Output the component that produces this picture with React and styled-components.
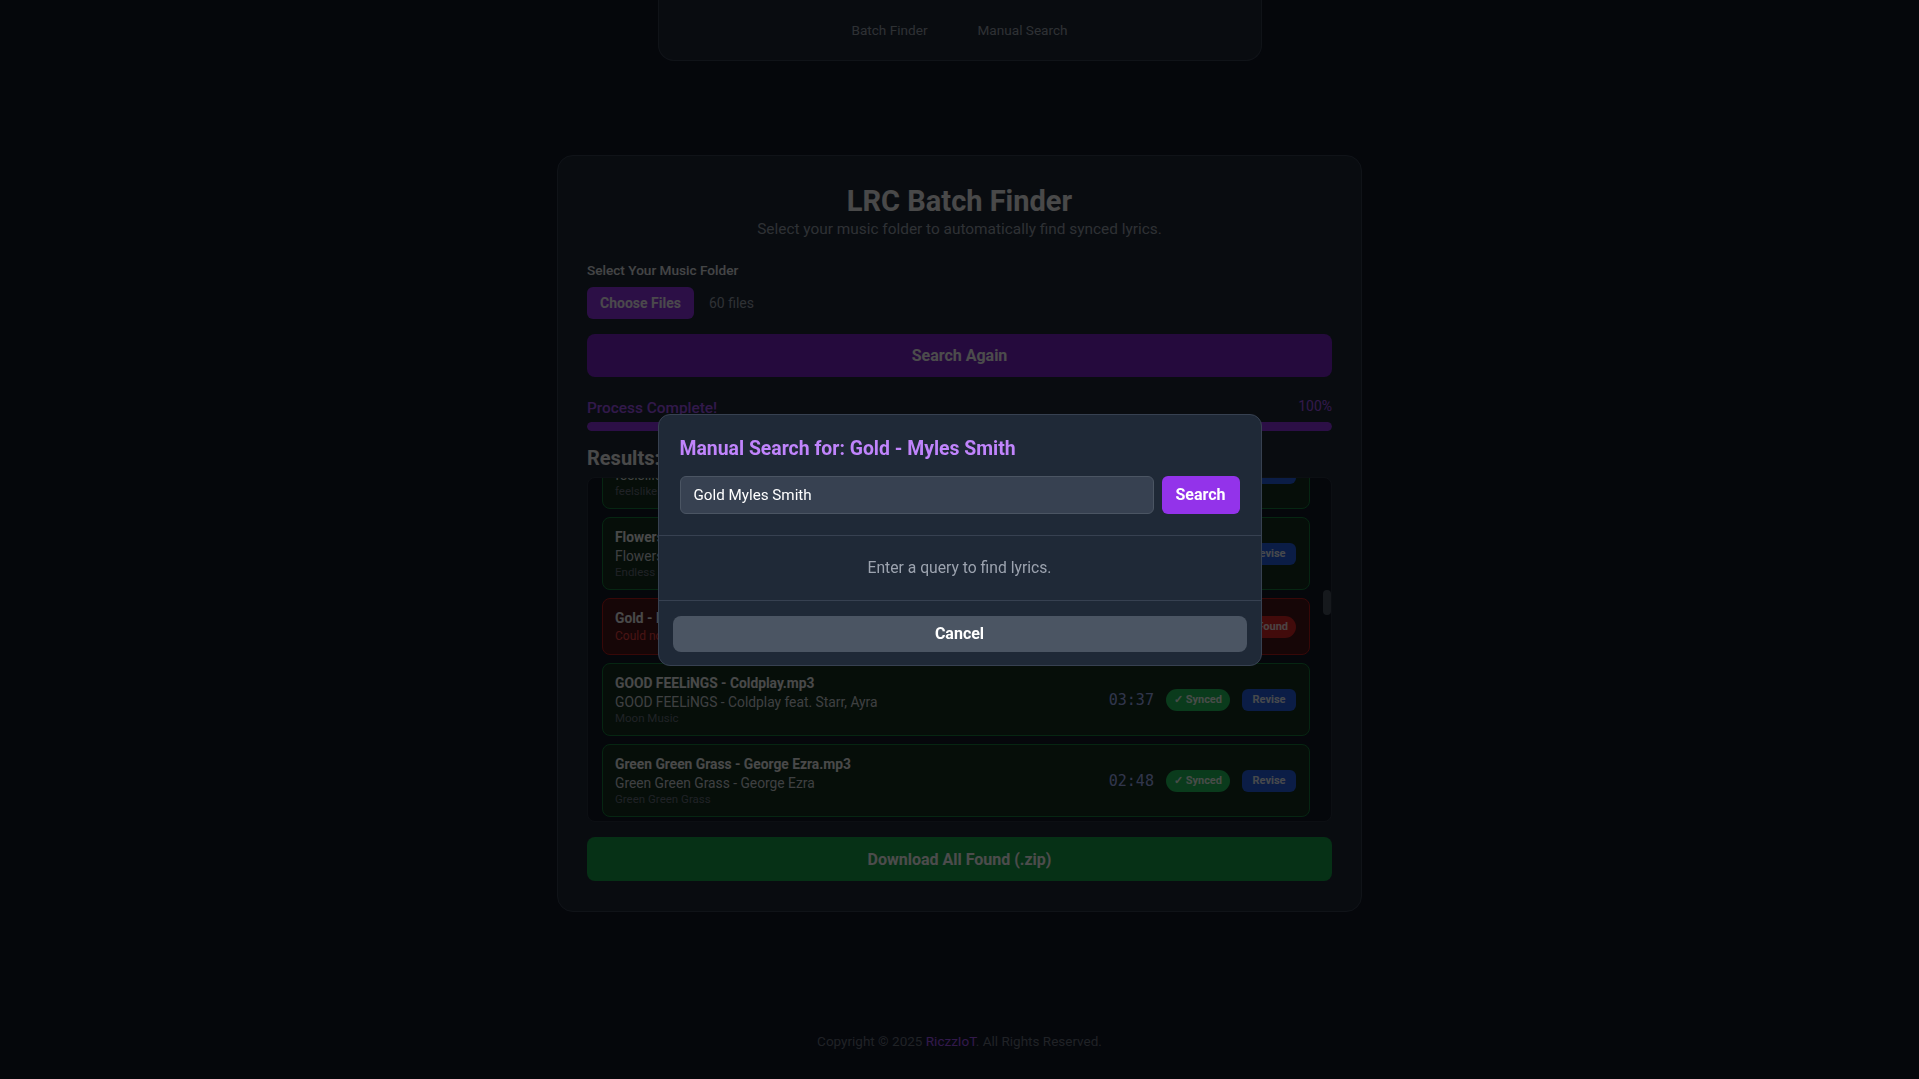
import React, { useLayoutEffect, useRef } from "react";
import styled, { createGlobalStyle } from "styled-components";

const GlobalStyle = createGlobalStyle`
  html, body { margin: 0; padding: 0; }
  body {
    background: #111827;
    font-family: Roboto, "Liberation Sans", Arial, sans-serif;
    color: #f3f4f6;
  }
  * { box-sizing: border-box; }
`;

const Page = styled.div`
  min-height: 100vh;
  display: flex;
  flex-direction: column;
  align-items: center;
`;

const Nav = styled.nav`
  width: 604px;
  height: 61px;
  background: #1f2937;
  border: 1px solid #374151;
  border-top: none;
  border-radius: 0 0 16px 16px;
  display: flex;
  justify-content: center;
  align-items: center;
  gap: 50px;
  padding-bottom: 1px;
`;

const NavLink = styled.a`
  font-size: 13.6px;
  color: #9ca3af;
  text-decoration: none;
`;

const Main = styled.main`
  flex: 1;
  width: 100%;
  display: flex;
  justify-content: center;
  padding-top: 94px;
`;

const Card = styled.section`
  width: 805px;
  height: 757px;
  background: #1f2937;
  border: 1px solid #374151;
  border-radius: 16px;
  padding: 27px 29px 29px;
  display: flex;
  flex-direction: column;
`;

const Title = styled.h1`
  margin: 0;
  text-align: center;
  font-size: 29px;
  line-height: 36px;
  font-weight: 700;
  color: #f3f4f6;
`;

const Subtitle = styled.p`
  margin: 0;
  text-align: center;
  font-size: 15.4px;
  line-height: 20px;
  color: #9ca3af;
`;

const Label = styled.div`
  margin-top: 21px;
  font-size: 13.6px;
  line-height: 20px;
  font-weight: 500;
  color: #e5e7eb;
`;

const FileRow = styled.div`
  margin-top: 7px;
  display: flex;
  align-items: center;
  gap: 15px;
`;

const ChooseButton = styled.button`
  height: 32px;
  width: 107px;
  padding: 0;
  border: none;
  border-radius: 6px;
  background: #9333ea;
  color: #faf5ff;
  font-family: inherit;
  font-size: 14px;
  font-weight: 700;
`;

const FileCount = styled.span`
  font-size: 14px;
  color: #9ca3af;
`;

const WideButton = styled.button`
  width: 100%;
  height: ${(p) => p.$h}px;
  margin-top: ${(p) => p.$mt}px;
  border: none;
  border-radius: 8px;
  background: ${(p) => p.$bg};
  color: #ffffff;
  font-family: inherit;
  font-size: 16px;
  font-weight: 700;
`;

const ProgressHead = styled.div`
  margin-top: 17px;
  display: flex;
  justify-content: space-between;
  align-items: center;
  height: 24px;
`;

const ProgressText = styled.span`
  font-size: 15.4px;
  font-weight: 500;
  color: #a855f7;
  padding-top: 4px;
`;

const ProgressPct = styled.span`
  font-size: 14px;
  color: #a855f7;
`;

const Bar = styled.div`
  margin-top: 4px;
  height: 9px;
  border-radius: 5px;
  background: #374151;
  overflow: hidden;
`;

const BarFill = styled.div`
  height: 100%;
  background: #9333ea;
  border-radius: 5px;
`;

const ResultsTitle = styled.h2`
  margin: 13px 0 0;
  font-size: 20px;
  line-height: 28px;
  font-weight: 700;
  color: #f3f4f6;
`;

const ListFrame = styled.div`
  position: relative;
  margin-top: 5px;
  height: 345px;
  border: 1px solid #2b3442;
  border-radius: 8px;
  background: #111827;
  overflow: hidden;
`;

const List = styled.div`
  height: 100%;
  padding: 6px 21px 6px 14px;
  overflow-y: scroll;
  scrollbar-width: none;
  display: flex;
  flex-direction: column;
  gap: 8px;
  &::-webkit-scrollbar { display: none; }
`;

const Thumb = styled.div`
  position: absolute;
  right: 0;
  width: 8px;
  border-radius: 4px;
  background: #4b5563;
`;

const Row = styled.div`
  flex: none;
  display: flex;
  align-items: center;
  gap: 12px;
  padding: 10px 13px 10px 12px;
  border-radius: 8px;
  border: 1px solid ${(p) => (p.$ok ? "#15803d" : "#b91c1c")};
  background: ${(p) => (p.$ok ? "#14301f" : "#4a1418")};
`;

const Info = styled.div`
  flex: 1;
  min-width: 0;
  display: flex;
  flex-direction: column;
`;

const FileName = styled.div`
  font-size: 13.8px;
  line-height: 19px;
  font-weight: 700;
  color: #f3f4f6;
  white-space: nowrap;
  overflow: hidden;
  text-overflow: ellipsis;
`;

const Track = styled.div`
  font-size: 13.8px;
  line-height: 18px;
  color: #d1d5db;
  white-space: nowrap;
`;

const Album = styled.div`
  font-size: 11.5px;
  line-height: 14px;
  color: #6b7280;
  white-space: nowrap;
`;

const ErrorText = styled.div`
  font-size: 12px;
  line-height: 16px;
  color: #ef4444;
`;

const Time = styled.span`
  font-family: "DejaVu Sans Mono", "Liberation Mono", monospace;
  font-size: 15px;
  color: #a5b4fc;
`;

const Badge = styled.span`
  height: 22px;
  padding: 0 8px;
  display: inline-flex;
  align-items: center;
  border-radius: 11px;
  font-size: 11px;
  font-weight: 700;
  color: ${(p) => (p.$ok ? "#f0fdf4" : "#fee2e2")};
  background: ${(p) => (p.$ok ? "#22c55e" : "#dc2626")};
`;

const ReviseButton = styled.button`
  height: 22px;
  width: 54px;
  border: none;
  border-radius: 6px;
  background: #2563eb;
  color: #eff6ff;
  font-family: inherit;
  font-size: 11px;
  font-weight: 700;
  padding: 0;
`;

const Footer = styled.footer`
  padding: 22px 0 28px;
  font-size: 13.5px;
  line-height: 20px;
  color: #6b7280;
`;

const FooterLink = styled.a`
  color: #a855f7;
  text-decoration: none;
`;

const Overlay = styled.div`
  position: fixed;
  inset: 0;
  background: rgba(0, 0, 0, 0.7);
  display: flex;
  align-items: center;
  justify-content: center;
`;

const Modal = styled.div`
  width: 604px;
  background: #1f2937;
  border: 1px solid #374151;
  border-radius: 12px;
  overflow: hidden;
`;

const ModalHead = styled.div`
  padding: 20px 21px 21px;
  border-bottom: 1px solid #374151;
`;

const ModalTitle = styled.h3`
  margin: 0 0 13px;
  font-size: 19.4px;
  line-height: 28px;
  font-weight: 700;
  color: #c084fc;
`;

const SearchRow = styled.div`
  display: flex;
  gap: 8px;
`;

const Input = styled.input`
  flex: 1;
  height: 38px;
  padding: 0 13px;
  border: 1px solid #4b5563;
  border-radius: 6px;
  background: #374151;
  color: #ffffff;
  font-family: inherit;
  font-size: 15.2px;
  outline: none;
`;

const SearchButton = styled.button`
  width: 78px;
  height: 38px;
  border: none;
  border-radius: 6px;
  background: #9333ea;
  color: #ffffff;
  font-family: inherit;
  font-size: 16px;
  font-weight: 700;
`;

const ModalBody = styled.div`
  padding: 20px;
  text-align: center;
  font-size: 15.7px;
  line-height: 24px;
  color: #9ca3af;
`;

const ModalFoot = styled.div`
  padding: 15px 14px 13px;
  border-top: 1px solid #374151;
`;

const CancelButton = styled.button`
  width: 100%;
  height: 36px;
  border: none;
  border-radius: 8px;
  background: #4b5563;
  color: #ffffff;
  font-family: inherit;
  font-size: 16px;
  font-weight: 700;
`;

const songs = [
  ["A Sky Full of Stars - Coldplay", "A Sky Full of Stars - Coldplay", "Ghost Stories", "04:28"],
  ["Adventure of a Lifetime - Coldplay", "Adventure of a Lifetime - Coldplay", "A Head Full of Dreams", "04:23"],
  ["All Of Me - John Legend", "All of Me - John Legend", "Love in the Future", "04:29"],
  ["Another Love - Tom Odell", "Another Love - Tom Odell", "Long Way Down", "04:04"],
  ["APT. - ROSÉ", "APT. - ROSÉ feat. Bruno Mars", "rosie", "02:49"],
  ["As It Was - Harry Styles", "As It Was - Harry Styles", "Harry's House", "02:47"],
  ["Bad Habits - Ed Sheeran", "Bad Habits - Ed Sheeran", "=", "03:51"],
  ["Beautiful Things - Benson Boone", "Beautiful Things - Benson Boone", "Fireworks & Rollerblades", "03:00"],
  ["Birds of a Feather - Billie Eilish", "BIRDS OF A FEATHER - Billie Eilish", "HIT ME HARD AND SOFT", "03:30"],
  ["Blinding Lights - The Weeknd", "Blinding Lights - The Weeknd", "After Hours", "03:20"],
  ["Budapest - George Ezra", "Budapest - George Ezra", "Wanted on Voyage", "03:20"],
  ["Counting Stars - OneRepublic", "Counting Stars - OneRepublic", "Native", "04:17"],
  ["Cruel Summer - Taylor Swift", "Cruel Summer - Taylor Swift", "Lover", "02:58"],
  ["Cupid - FIFTY FIFTY", "Cupid (Twin Ver.) - FIFTY FIFTY", "The Beginning: Cupid", "02:54"],
  ["Dance Monkey - Tones And I", "Dance Monkey - Tones And I", "The Kids Are Coming", "03:29"],
  ["Daylight - David Kushner", "Daylight - David Kushner", "Daylight", "03:32"],
  ["Die With A Smile - Lady Gaga", "Die With A Smile - Lady Gaga, Bruno Mars", "Die With A Smile", "04:11"],
  ["Espresso - Sabrina Carpenter", "Espresso - Sabrina Carpenter", "Short n' Sweet", "02:55"],
  ["Everybody Wants To Rule The World - Tears For Fears", "Everybody Wants To Rule The World - Tears For Fears", "Songs From The Big Chair", "04:11"],
  ["feelslikeimfallinginlove - Coldplay", "feelslikeimfallinginlove - Coldplay", "feelslikeimfallinginlove", "03:57"],
  ["Flowers - Miley Cyrus", "Flowers - Miley Cyrus", "Endless Summer Vacation", "03:20", "flowers"],
  ["Gold - Myles Smith", null, null, null],
  ["GOOD FEELiNGS - Coldplay", "GOOD FEELiNGS - Coldplay feat. Starr, Ayra", "Moon Music", "03:37"],
  ["Green Green Grass - George Ezra", "Green Green Grass - George Ezra", "Green Green Grass", "02:48"],
  ["Happier Than Ever - Billie Eilish", "Happier Than Ever - Billie Eilish", "Happier Than Ever", "04:58"],
  ["Heat Waves - Glass Animals", "Heat Waves - Glass Animals", "Dreamland", "03:58"],
  ["Houdini - Dua Lipa", "Houdini - Dua Lipa", "Radical Optimism", "03:05"],
  ["Hymn For The Weekend - Coldplay", "Hymn for the Weekend - Coldplay", "A Head Full of Dreams", "04:18"],
  ["I Ain't Worried - OneRepublic", "I Ain't Worried - OneRepublic", "Top Gun: Maverick", "02:28"],
  ["Just the Way You Are - Bruno Mars", "Just the Way You Are - Bruno Mars", "Doo-Wops & Hooligans", "03:40"],
  ["Levitating - Dua Lipa", "Levitating - Dua Lipa", "Future Nostalgia", "03:23"],
  ["Lose Control - Teddy Swims", "Lose Control - Teddy Swims", "I've Tried Everything But Therapy", "03:30"],
  ["lovely - Billie Eilish", "lovely - Billie Eilish, Khalid", "lovely", "03:20"],
  ["Lovin On Me - Jack Harlow", "Lovin On Me - Jack Harlow", "Lovin On Me", "02:18"],
  ["Million Dollar Baby - Tommy Richman", "MILLION DOLLAR BABY - Tommy Richman", "COYOTE", "02:35"],
  ["Night Changes - One Direction", "Night Changes - One Direction", "FOUR", "03:46"],
  ["Paradise - Coldplay", "Paradise - Coldplay", "Mylo Xyloto", "04:38"],
  ["Perfect - Ed Sheeran", "Perfect - Ed Sheeran", "÷", "04:23"],
  ["Pink Pony Club - Chappell Roan", "Pink Pony Club - Chappell Roan", "The Rise and Fall of a Midwest Princess", "04:18"],
  ["Riptide - Vance Joy", "Riptide - Vance Joy", "Dream Your Life Away", "03:24"],
  ["Shallow - Lady Gaga", "Shallow - Lady Gaga, Bradley Cooper", "A Star Is Born", "03:36"],
  ["Shape of You - Ed Sheeran", "Shape of You - Ed Sheeran", "÷", "03:53"],
  ["Shivers - Ed Sheeran", "Shivers - Ed Sheeran", "=", "03:27"],
  ["Snooze - SZA", "Snooze - SZA", "SOS", "03:21"],
  ["Someone Like You - Adele", "Someone Like You - Adele", "21", "04:45"],
  ["Someone You Loved - Lewis Capaldi", "Someone You Loved - Lewis Capaldi", "Divinely Uninspired to a Hellish Extent", "03:02"],
  ["Stay - The Kid LAROI", "STAY - The Kid LAROI, Justin Bieber", "F*CK LOVE 3: OVER YOU", "02:21"],
  ["Stick Season - Noah Kahan", "Stick Season - Noah Kahan", "Stick Season", "03:02"],
  ["Sunflower - Post Malone", "Sunflower - Post Malone, Swae Lee", "Hollywood's Bleeding", "02:38"],
  ["Take Me to Church - Hozier", "Take Me to Church - Hozier", "Hozier", "04:01"],
  ["The Scientist - Coldplay", "The Scientist - Coldplay", "A Rush of Blood to the Head", "05:09"],
  ["Too Sweet - Hozier", "Too Sweet - Hozier", "Unheard", "04:11"],
  ["Unholy - Sam Smith", "Unholy - Sam Smith, Kim Petras", "Gloria", "02:36"],
  ["Until I Found You - Stephen Sanchez", "Until I Found You - Stephen Sanchez", "Easy On My Eyes", "02:57"],
  ["Viva La Vida - Coldplay", "Viva La Vida - Coldplay", "Viva La Vida or Death and All His Friends", "04:01"],
  ["Watermelon Sugar - Harry Styles", "Watermelon Sugar - Harry Styles", "Fine Line", "02:54"],
  ["We Don't Talk Anymore - Charlie Puth", "We Don't Talk Anymore - Charlie Puth, Selena Gomez", "Nine Track Mind", "03:37"],
  ["Yellow - Coldplay", "Yellow - Coldplay", "Parachutes", "04:26"],
  ["Young and Beautiful - Lana Del Rey", "Young and Beautiful - Lana Del Rey", "The Great Gatsby", "03:56"],
  ["Zombie - The Cranberries", "Zombie - The Cranberries", "No Need to Argue", "05:06"],
];

function ResultRow({ song, rowRef }) {
  const [file, track, album, time] = song;
  const ok = track !== null;
  return (
    <Row $ok={ok} ref={rowRef}>
      <Info>
        <FileName>{file}.mp3</FileName>
        {ok ? (
          <>
            <Track>{track}</Track>
            <Album>{album}</Album>
          </>
        ) : (
          <ErrorText>Could not find synced lyrics.</ErrorText>
        )}
      </Info>
      {ok ? (
        <>
          <Time>{time}</Time>
          <Badge $ok>✓ Synced</Badge>
          <ReviseButton>Revise</ReviseButton>
        </>
      ) : (
        <Badge>✗ Not Found</Badge>
      )}
    </Row>
  );
}

export default function App() {
  const listRef = useRef(null);
  const anchorRef = useRef(null);
  const thumbRef = useRef(null);

  useLayoutEffect(() => {
    const list = listRef.current;
    const thumb = thumbRef.current;
    if (!list || !anchorRef.current || !thumb) return;
    list.scrollTop = anchorRef.current.offsetTop - list.offsetTop - 39;
    const update = () => {
      const h = list.clientHeight;
      const sh = list.scrollHeight;
      thumb.style.height = `${(h * h) / sh}px`;
      thumb.style.top = `${(list.scrollTop / sh) * h}px`;
    };
    update();
    list.addEventListener("scroll", update);
    return () => list.removeEventListener("scroll", update);
  }, []);

  return (
    <>
      <GlobalStyle />
      <Page>
        <Nav>
          <NavLink href="#">Batch Finder</NavLink>
          <NavLink href="#">Manual Search</NavLink>
        </Nav>
        <Main>
          <Card>
            <Title>LRC Batch Finder</Title>
            <Subtitle>Select your music folder to automatically find synced lyrics.</Subtitle>
            <Label>Select Your Music Folder</Label>
            <FileRow>
              <ChooseButton>Choose Files</ChooseButton>
              <FileCount>60 files</FileCount>
            </FileRow>
            <WideButton $h={43} $mt={15} $bg="#7e22ce">Search Again</WideButton>
            <ProgressHead>
              <ProgressText>Process Complete!</ProgressText>
              <ProgressPct>100%</ProgressPct>
            </ProgressHead>
            <Bar>
              <BarFill style={{ width: "100%" }} />
            </Bar>
            <ResultsTitle>Results:</ResultsTitle>
            <ListFrame>
              <List ref={listRef}>
                {songs.map((s, i) => (
                  <ResultRow key={i} song={s} rowRef={s[4] === "flowers" ? anchorRef : undefined} />
                ))}
              </List>
              <Thumb ref={thumbRef} />
            </ListFrame>
            <WideButton $h={44} $mt={15} $bg="#16a34a">Download All Found (.zip)</WideButton>
          </Card>
        </Main>
        <Footer>
          Copyright © 2025 <FooterLink href="#">RiczzIoT</FooterLink>. All Rights Reserved.
        </Footer>
      </Page>
      <Overlay>
        <Modal>
          <ModalHead>
            <ModalTitle>Manual Search for: Gold - Myles Smith</ModalTitle>
            <SearchRow>
              <Input defaultValue="Gold Myles Smith" />
              <SearchButton>Search</SearchButton>
            </SearchRow>
          </ModalHead>
          <ModalBody>Enter a query to find lyrics.</ModalBody>
          <ModalFoot>
            <CancelButton>Cancel</CancelButton>
          </ModalFoot>
        </Modal>
      </Overlay>
    </>
  );
}
